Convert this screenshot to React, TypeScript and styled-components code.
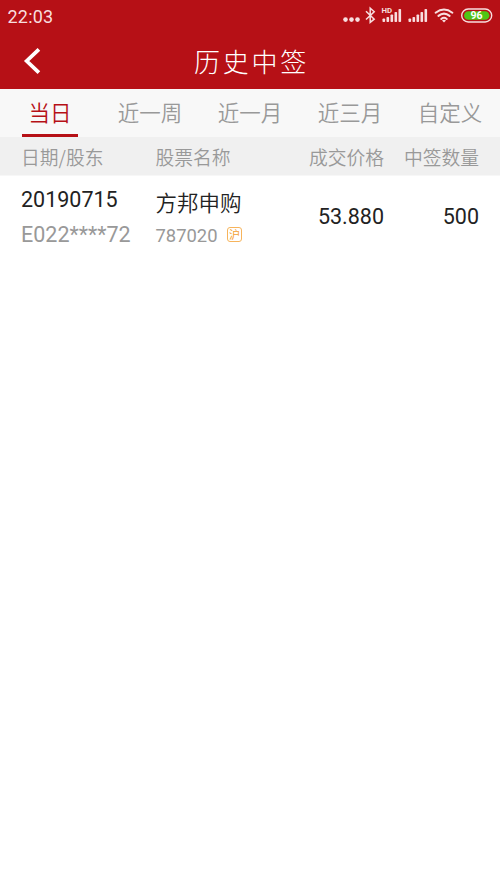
import React from "react";
import styled, { createGlobalStyle } from "styled-components";

const GlobalStyle = createGlobalStyle`
  * { box-sizing: border-box; }
  body {
    margin: 0;
    background: #fff;
    font-family: Roboto, "Noto Sans CJK SC", sans-serif;
  }
`;

const Screen = styled.main`
  min-height: 889px;
  background: #fff;
`;

const Header = styled.header`
  height: 89px;
  background: #b61016;
  color: #fff;
`;

const StatusBar = styled.div`
  height: 32px;
  padding: 0 7px 0 7.5px;
  display: flex;
  align-items: center;
  justify-content: space-between;
`;

const Clock = styled.time`
  padding-top: 1px;
  font-size: 18px;
  line-height: 32px;
  letter-spacing: 0.2px;
  color: #f8dedf;
`;

const StatusIcons = styled.svg`
  display: block;
  width: 155px;
  height: 32px;
`;

const BatteryLevel = styled.text`
  font: 700 10.5px Roboto, sans-serif;
`;

const NetworkLabel = styled.text`
  font: 700 7.8px Roboto, sans-serif;
`;

const TitleBar = styled.div`
  height: 57px;
  display: grid;
  grid-template-columns: 64px 1fr 64px;
  align-items: center;
`;

const BackButton = styled.button`
  height: 57px;
  padding: 0 0 3px 22px;
  border: 0;
  background: none;
  color: #fff;

  svg { display: block; }
`;

const Title = styled.h1`
  margin: 0;
  padding: 3px 0 0 3px;
  text-align: center;
  font-size: 26px;
  font-weight: 300;
  line-height: 57px;
  letter-spacing: 2.8px;
`;

const Tabs = styled.nav`
  height: 48px;
  display: grid;
  grid-template-columns: repeat(5, 1fr);
  justify-items: center;
  background: #f8f8f8;
`;

const Tab = styled.button<{ $active?: boolean }>`
  height: 48px;
  padding: 1px 6.5px 0;
  border: 0;
  border-bottom: 3px solid ${({ $active }) => ($active ? "#b61016" : "transparent")};
  background: none;
  color: ${({ $active }) => ($active ? "#b61016" : "#999")};
  font: 350 21.5px/42px "Noto Sans CJK SC", sans-serif;
`;

const Columns = styled.div`
  display: grid;
  grid-template-columns: 134.5px 120px 108.5px 1fr;
  padding: 0 21px;
`;

const TableHead = styled(Columns)`
  height: 38px;
  background: #f0f0f0;
  color: #999;
  font-family: "Noto Sans CJK SC", sans-serif;
  font-size: 18.8px;
  font-weight: 350;
  line-height: 40px;
`;

const Label = styled.span<{ $right?: boolean }>`
  text-align: ${({ $right }) => ($right ? "right" : "left")};
  white-space: nowrap;
`;

const Row = styled(Columns)`
  height: 82px;
  border-top: 1px solid #f7f7f7;
  color: #222;
  font-size: 21.5px;
`;

const Stack = styled.div`
  padding-top: 7px;
`;

const Primary = styled.div<{ $cjk?: boolean }>`
  height: 34px;
  font-weight: ${({ $cjk }) => ($cjk ? 350 : 400)};
  line-height: ${({ $cjk }) => ($cjk ? 42 : 34)}px;
`;

const Secondary = styled.div<{ $size: number }>`
  height: 34px;
  display: flex;
  align-items: center;
  gap: 9.5px;
  color: #999;
  font-size: ${({ $size }) => $size}px;
`;

const Code = styled.span`
  padding-top: 2px;
`;

const Market = styled.span`
  width: 15px;
  height: 15px;
  border: 1px solid #f7b45c;
  border-radius: 3px;
  color: #f5a033;
  font-family: "Noto Sans CJK SC", sans-serif;
  font-size: 11px;
  line-height: 13px;
  text-align: center;
`;

const Value = styled.div`
  text-align: right;
  line-height: 82px;
`;

const SIGNAL_BARS = [3.5, 5, 7.5, 10, 13];

function Signal({ x }: { x: number }) {
  return (
    <g fill="#f8dedf">
      {SIGNAL_BARS.map((h, i) => (
        <rect key={h} x={x + i * 4} y={22 - h} width="2.6" height={h} rx="0.8" />
      ))}
    </g>
  );
}

function StatusGlyphs() {
  return (
    <StatusIcons viewBox="338 0 155 32" aria-label="手机状态">
      <g fill="#f8dedf">
        <circle cx="345.5" cy="19.6" r="2.3" />
        <circle cx="351.5" cy="19.6" r="2.3" />
        <circle cx="357.5" cy="19.6" r="2.3" />
      </g>
      <path d="M366 11.2 374.2 19.2 370.2 22.4V8.2L374.2 11.7 366 19.5" fill="none" stroke="#f8dedf" strokeWidth="1.5" />
      <NetworkLabel x="381.5" y="13.2" fill="#f8dedf">HD</NetworkLabel>
      <Signal x={382.5} />
      <Signal x={408.5} />
      <g fill="none" stroke="#f8dedf" strokeWidth="2" strokeLinecap="round">
        <path d="M435.6 12.7Q444 6.2 452.4 12.7" />
        <path d="M438.4 15.9Q444 11.4 449.6 15.9" />
        <path d="M441.2 18.9Q444 16.6 446.8 18.9" />
      </g>
      <path d="M442 20.6Q444 19 446 20.6L444 22.6Z" fill="#f8dedf" />
      <rect x="461.7" y="9" width="30" height="13" rx="6.5" fill="none" stroke="#f8dedf" strokeWidth="1.4" />
      <rect x="464" y="11.2" width="25.4" height="8.6" rx="4.3" fill="#4fc514" />
      <BatteryLevel x="476.5" y="19.3" textAnchor="middle" fill="#fff">96</BatteryLevel>
    </StatusIcons>
  );
}

const TABS = ["当日", "近一周", "近一月", "近三月", "自定义"];

const RECORDS = [
  { date: "20190715", holder: "E022****72", name: "方邦申购", code: "787020", market: "沪", price: "53.880", count: "500" },
];

export default function App() {
  return (
    <>
      <GlobalStyle />
      <Screen>
        <Header>
          <StatusBar>
            <Clock>22:03</Clock>
            <StatusGlyphs />
          </StatusBar>
          <TitleBar>
            <BackButton aria-label="返回">
              <svg width="20" height="30" viewBox="0 0 20 30">
                <path d="M16.9 3.3 4.7 15 16.9 26.7" fill="none" stroke="currentColor" strokeWidth="3.8" />
              </svg>
            </BackButton>
            <Title>历史中签</Title>
          </TitleBar>
        </Header>
        <Tabs>
          {TABS.map((tab, i) => (
            <Tab key={tab} $active={i === 0}>{tab}</Tab>
          ))}
        </Tabs>
        <TableHead>
          <Label>日期/股东</Label>
          <Label>股票名称</Label>
          <Label $right>成交价格</Label>
          <Label $right>中签数量</Label>
        </TableHead>
        {RECORDS.map((r) => (
          <Row key={r.date + r.code}>
            <Stack>
              <Primary>{r.date}</Primary>
              <Secondary $size={21.5}>{r.holder}</Secondary>
            </Stack>
            <Stack>
              <Primary $cjk>{r.name}</Primary>
              <Secondary $size={18.4}>
                <Code>{r.code}</Code>
                <Market>{r.market}</Market>
              </Secondary>
            </Stack>
            <Value>{r.price}</Value>
            <Value>{r.count}</Value>
          </Row>
        ))}
      </Screen>
    </>
  );
}
